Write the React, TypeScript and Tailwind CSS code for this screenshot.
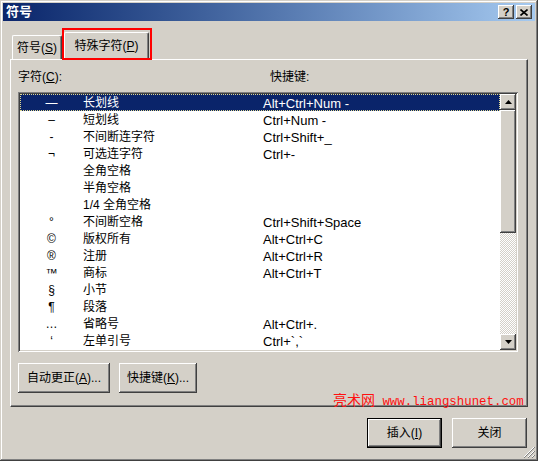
import React from "react";

const rows: [string, string, string][] = [
  ["—", "长划线", "Alt+Ctrl+Num -"],
  ["–", "短划线", "Ctrl+Num -"],
  ["-", "不间断连字符", "Ctrl+Shift+_"],
  ["¬", "可选连字符", "Ctrl+-"],
  ["", "全角空格", ""],
  ["", "半角空格", ""],
  ["", "1/4 全角空格", ""],
  ["°", "不间断空格", "Ctrl+Shift+Space"],
  ["©", "版权所有", "Alt+Ctrl+C"],
  ["®", "注册", "Alt+Ctrl+R"],
  ["™", "商标", "Alt+Ctrl+T"],
  ["§", "小节", ""],
  ["¶", "段落", ""],
  ["…", "省略号", "Alt+Ctrl+."],
  ["‘", "左单引号", "Ctrl+`,`"],
];

const raised =
  "bg-[#d4d0c8] shadow-[inset_-1px_-1px_#404040,inset_1px_1px_#ffffff,inset_-2px_-2px_#808080]";

function Btn({ children, w, isDefault }: { children: React.ReactNode; w: string; isDefault?: boolean }) {
  if (isDefault) {
    return (
      <div className={`${w} h-[30px] border border-black flex`}>
        <div className={`flex-1 flex items-center justify-center text-[12px] leading-[14px] text-black ${raised}`}>
          {children}
        </div>
      </div>
    );
  }
  return (
    <div className={`${w} h-[30px] flex items-center justify-center text-[12px] leading-[14px] text-black ${raised}`}>
      {children}
    </div>
  );
}

function Arrow({ up }: { up?: boolean }) {
  return (
    <div className={`w-[16px] h-[16px] flex items-center justify-center ${raised}`}>
      <svg width="7" height="4" viewBox="0 0 7 4">
        {up ? <polygon points="3.5,0 7,4 0,4" fill="#000" /> : <polygon points="0,0 7,0 3.5,4" fill="#000" />}
      </svg>
    </div>
  );
}

export default function App() {
  return (
    <div className="w-[538px] h-[461px] relative bg-[#d4d0c8] p-[3px] flex flex-col font-['Liberation_Sans','Noto_Sans_CJK_SC',sans-serif] shadow-[inset_-1px_-1px_#404040,inset_1px_1px_#d4d0c8,inset_-2px_-2px_#808080,inset_2px_2px_#ffffff]">
      {/* Title bar */}
      <div className="h-[18px] flex items-center bg-linear-to-r from-[#0a246a] to-[#a6caf0] pl-[3px] pr-[3px]">
        <span className="text-white font-bold text-[13px] leading-[18px]">符号</span>
        <div className="ml-auto flex gap-[2px]">
          <div className={`w-[16px] h-[14px] flex items-center justify-center text-[11px] font-bold leading-none ${raised}`}>?</div>
          <div className={`w-[16px] h-[14px] flex items-center justify-center ${raised}`}>
            <svg width="8" height="7" viewBox="0 0 8 7">
              <path d="M0.5 0.5 L7.5 6.5 M7.5 0.5 L0.5 6.5" stroke="#000" strokeWidth="1.6" />
            </svg>
          </div>
        </div>
      </div>

      {/* Body */}
      <div className="px-[7px] flex flex-col">
        {/* Tabs */}
        <div className="mt-[11px] h-[27px] flex items-end relative">
          <div className="ml-[2px] w-[50px] h-[24px] flex items-center justify-center text-[12px] leading-[14px] border-t border-l border-white border-r border-r-[#404040] rounded-t-[2px] shadow-[inset_-1px_0_#808080]">
            符号(<span className="underline">S</span>)
          </div>
          <div className="ml-[2px] w-[85px] h-[28px] -mb-[1px] relative z-10 bg-[#d4d0c8] flex items-start pt-[6px] justify-center text-[12px] leading-[14px] border-t border-l border-white border-r border-r-[#404040] rounded-t-[2px] shadow-[inset_-1px_0_#808080]">
            特殊字符(<span className="underline">P</span>)
          </div>
          <div className="absolute left-[52px] top-[-4px] w-[90px] h-[32px] border-[2px] border-[#ff0000] z-20" />
        </div>

        {/* Panel */}
        <div className="relative h-[348px] w-[518px] border-t border-l border-white border-r border-b border-r-[#404040] border-b-[#404040] shadow-[inset_-1px_-1px_#808080] pl-[7px] pr-[9px] flex flex-col">
          <div className="mt-[9px] h-[16px] flex text-[12px] leading-[16px] text-black">
            <div className="w-[252px]">
              字符(<span className="underline">C</span>):
            </div>
            <div>快捷键:</div>
          </div>

          {/* List */}
          <div className="mt-[7px] w-[500px] h-[260px] bg-white p-[2px] flex shadow-[inset_1px_1px_#808080,inset_-1px_-1px_#ffffff,inset_2px_2px_#404040,inset_-2px_-2px_#d4d0c8]">
            <div className="flex-1 flex flex-col overflow-hidden">
              {rows.map(([sym, name, key], i) => {
                const sel = i === 0;
                return (
                  <div
                    key={i}
                    className={`h-[17px] flex items-start shrink-0 ${
                      sel ? "bg-[#0a246a] text-white outline outline-1 outline-dotted outline-[#e0d890] -outline-offset-1" : "text-black"
                    }`}
                  >
                    <div className="w-[63px] pt-[2px] text-center text-[12px] leading-[15px]">{sym}</div>
                    <div className="w-[180px] pt-[2px] text-[12px] leading-[15px] whitespace-pre">{name}</div>
                    <div className="pt-[2px] text-[13px] leading-[15px] whitespace-pre font-['Liberation_Sans',sans-serif]">{key}</div>
                  </div>
                );
              })}
            </div>
            {/* Scrollbar */}
            <div className="w-[16px] flex flex-col">
              <Arrow up />
              <div className={`h-[123px] w-[16px] ${raised}`} />
              <div className="flex-1 bg-[repeating-conic-gradient(#ffffff_0_25%,#d4d0c8_0_50%)] bg-[length:2px_2px]" />
              <Arrow />
            </div>
          </div>

          {/* Buttons */}
          <div className="mt-[11px] flex gap-[9px]">
            <Btn w="w-[92px]">
              自动更正(<span className="underline">A</span>)...
            </Btn>
            <Btn w="w-[78px]">
              快捷键(<span className="underline">K</span>)...
            </Btn>
          </div>

          <div className="absolute left-[322px] top-[330px] flex items-baseline text-[#ff1010] z-10 whitespace-pre">
            <span className="text-[14px] leading-[18px] font-['Noto_Sans_CJK_SC',sans-serif]">亮术网</span>
            <span className="text-[12.4px] leading-[18px] font-['Liberation_Mono',monospace]"> www.liangshunet.com</span>
          </div>
        </div>

        {/* Bottom buttons */}
        <div className="mt-[11px] flex justify-end gap-[10px] pr-[1px]">
          <Btn w="w-[75px]" isDefault>
            插入(<span className="underline">I</span>)
          </Btn>
          <Btn w="w-[75px]">关闭</Btn>
        </div>
      </div>

      {/* resize grip */}
      <svg className="absolute right-[3px] bottom-[3px]" width="12" height="12" viewBox="0 0 12 12">
        <path d="M11 1 L1 11 M11 5 L5 11 M11 9 L9 11" stroke="#ffffff" strokeWidth="1" />
        <path d="M12 1 L1 12 M12 5 L5 12 M12 9 L9 12" stroke="#808080" strokeWidth="1" />
      </svg>
    </div>
  );
}
